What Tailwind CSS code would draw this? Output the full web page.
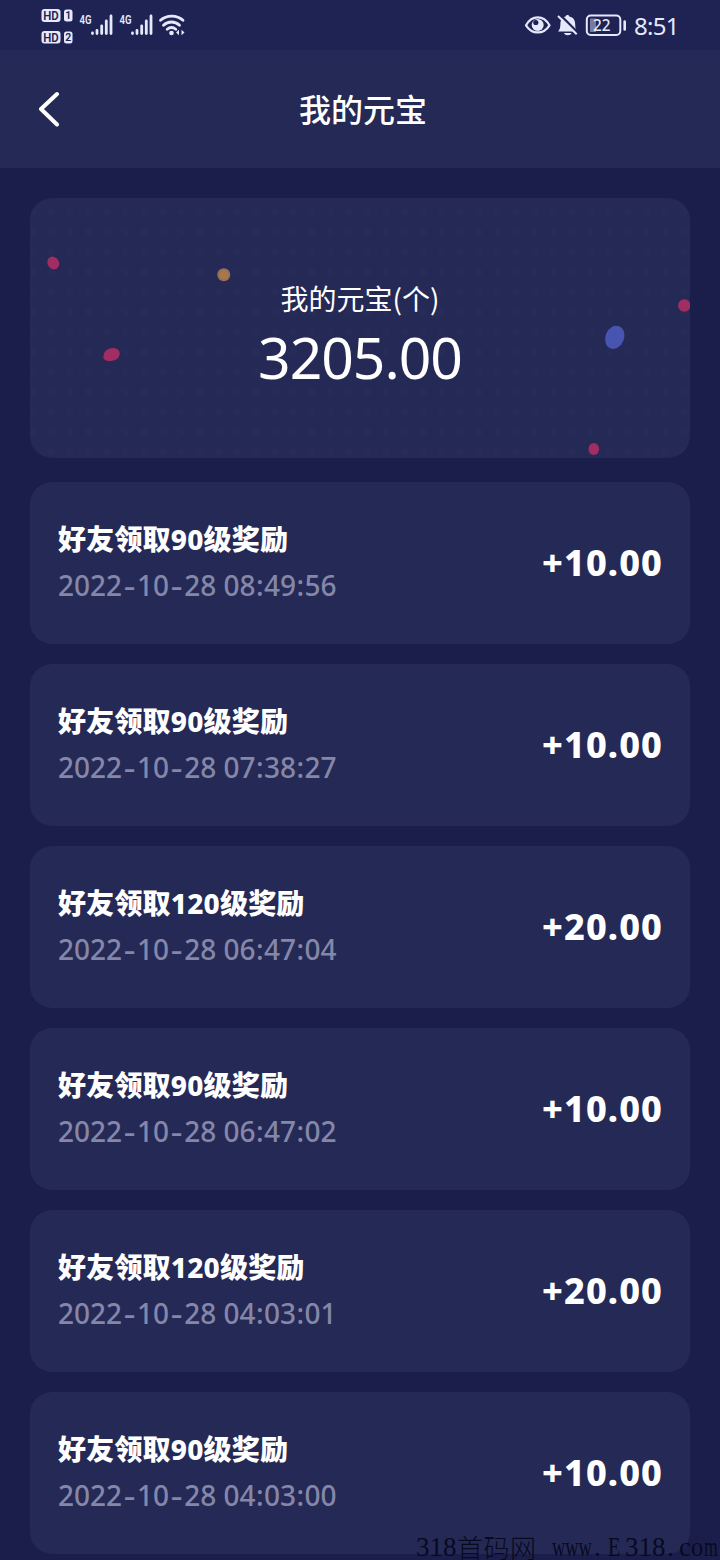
<!DOCTYPE html>
<html lang="zh-CN">
<head>
<meta charset="utf-8">
<title>我的元宝</title>
<script src="https://cdn.jsdelivr.net/npm/@tailwindcss/browser@4"></script>
</head>
<body class="bg-[#1b1e4b]">
<div class="relative flex h-[1560px] w-[720px] flex-col overflow-hidden bg-[#1b1e4b] font-['Noto_Sans','Noto_Sans_CJK_SC',sans-serif] text-white">

  <div class="flex h-[50px] shrink-0 items-center justify-between bg-[#1e2353] pl-[40px] pr-[42px] text-[#e6e8fb]">
    <svg class="h-[50px] w-[150px]" viewBox="40 0 150 50" fill="#e6e8fb" font-family="Roboto, sans-serif">
      <rect x="41.500" y="9" width="19" height="13" rx="3"/><rect x="64" y="9.500" width="8.500" height="12" rx="2.500"/>
      <rect x="41.500" y="31" width="19" height="12.500" rx="3"/><rect x="64" y="31.500" width="8.500" height="12" rx="2.500"/>
      <g fill="#1e2353" font-weight="600"><text x="43.300" y="19.700" font-size="12" textLength="15.500" lengthAdjust="spacingAndGlyphs">HD</text><text x="65.300" y="19.300" font-size="10.500">1</text><text x="43.300" y="41.500" font-size="12" textLength="15.500" lengthAdjust="spacingAndGlyphs">HD</text><text x="65.300" y="41.300" font-size="10.500">2</text></g>
      <g font-weight="600" font-size="12.500"><text x="79.500" y="24" textLength="12" lengthAdjust="spacingAndGlyphs">4G</text><text x="119.500" y="24" textLength="12" lengthAdjust="spacingAndGlyphs">4G</text></g>
      <g stroke="#e6e8fb" stroke-width="2.800" stroke-linecap="round"><path d="M92.500 33v.5M97 30.500v3M101.700 26v7.500M106.300 21v12.500M111 16v17.500M132.500 33v.5M137 30.500v3M141.700 26v7.500M146.300 21v12.500M151 16v17.500"/></g>
      <g fill="none" stroke="#e6e8fb" stroke-width="2.800" stroke-linecap="round"><path d="M160.500 20.300c6-5.700 16.500-5.700 22.500 0M163.500 25.200c4.500-4.300 11.500-4.300 16 0M167.200 29.300c2.700-2.300 5.900-2.300 8.600 0"/></g>
      <circle cx="171.500" cy="33" r="2.300"/><path d="M176 32.500l3-2.700v5.400zM184.500 32.500l-3-2.700v5.400z"/>
    </svg>
    <div class="flex items-center">
      <svg class="h-[50px] w-[104px]" viewBox="524 0 104 50" fill="none">
        <path d="M526 25.300c6-10.500 17.500-10.500 23.500 0-6 9.500-17.500 9.500-23.500 0z" stroke="#e6e8fb" stroke-width="2.200" stroke-linejoin="round"/>
        <circle cx="537.700" cy="25" r="6" fill="#e6e8fb"/><circle cx="535.800" cy="22.500" r="2.600" fill="#1e2353"/>
        <path d="M558 31.500c1.800-2 2.400-4 2.400-7.500 0-4.500 2-6.800 5.300-7.600 0-2 3.600-2 3.600 0 4.300 .9 5.900 4 5.900 8 0 3.500.4 5 2.400 7.100z" fill="#e6e8fb"/><path d="M564 33h7.500c-1 3-6.500 3-7.500 0z" fill="#e6e8fb"/>
        <path d="M559.800 14.500l18 18" stroke="#1e2353" stroke-width="2.400"/><path d="M558 16l18.700 18.300" stroke="#e6e8fb" stroke-width="2"/>
        <rect x="586.800" y="15.500" width="33.500" height="19.500" rx="4" stroke="#e6e8fb" stroke-width="2"/><path d="M590 18.500h6v13.500h-6z" fill="#777b9f"/>
        <path d="M624.700 21.500v8" stroke="#e6e8fb" stroke-width="2.600" stroke-linecap="round"/>
        <text x="593" y="31" font-size="17" font-family="'Noto Sans', sans-serif" font-weight="500" fill="#e6e8fb" textLength="17.500" lengthAdjust="spacingAndGlyphs">22</text>
      </svg>
      <span class="ml-[6px] mt-[1px] w-[44px] whitespace-nowrap text-[24px] leading-none tracking-[-0.7px]">8:51</span>
    </div>
  </div>

  <header class="grid h-[118px] shrink-0 grid-cols-3 items-center bg-[#252955]">
    <svg class="ml-[36px] h-[36px] w-[26px]" viewBox="0 0 26 36" fill="none" stroke="#fff" stroke-width="4" stroke-linecap="round" stroke-linejoin="round"><path d="M21 3L5 18l16 15.500"/></svg>
    <h1 class="mb-[3px] ml-[6px] whitespace-nowrap text-center font-['Noto_Sans_CJK_SC',sans-serif] text-[32px] font-medium leading-[40px]">我的元宝</h1>
  </header>

  <main class="flex flex-col px-[30px] pt-[30px]">
    <section class="relative flex h-[260px] flex-col items-center overflow-hidden rounded-[22px] bg-[#252955] pt-[80px]">
      <svg class="absolute inset-0 h-full w-full" viewBox="30 198 660 260">
        <defs><pattern id="dots" x="42" y="202" width="18.600" height="20" patternUnits="userSpaceOnUse"><circle cx="9.300" cy="10" r="3.500" fill="#272b57"/></pattern></defs>
        <rect x="30" y="198" width="660" height="260" fill="url(#dots)"/>
        <ellipse cx="53.300" cy="263" rx="5.700" ry="6.700" transform="rotate(-30 53.300 263)" fill="#a12d62"/>
        <circle cx="223.800" cy="274.700" r="6.500" fill="#987059"/><circle cx="223.800" cy="274.700" r="4.500" fill="#a87848"/>
        <path d="M104 354c1-4 5-6 10-6 8 1 7 10 1 12-3 1-7 2-10 0-2-1-2-4-1-6z" fill="#a12d62"/>
        <ellipse cx="614.800" cy="337.300" rx="9.300" ry="11.900" transform="rotate(22 614.800 337.300)" fill="#4855b0"/>
        <circle cx="684.300" cy="305.500" r="6.200" fill="#a12d62"/>
        <ellipse cx="593.800" cy="449" rx="5.300" ry="6" fill="#a12d62"/>
      </svg>
      <div class="relative whitespace-nowrap font-['Noto_Sans_CJK_SC',sans-serif] text-[28px] leading-[40px]">我的元宝(个)</div>
      <div class="relative mt-[11px] whitespace-nowrap text-[57px] leading-[56px] tracking-[-1px]">3205.00</div>
    </section>

    <ul id="records" class="mt-[24px] flex flex-col gap-[20px]"></ul>
  </main>

  <div class="absolute bottom-0 left-[416px] flex h-[26px] items-center whitespace-nowrap font-['Liberation_Serif',serif] text-[27px] leading-[26px] text-[#080a20]">
    <span class="w-[41px] tracking-[0px]">318</span>
    <span class="w-[95px] font-['Noto_Sans_CJK_SC',sans-serif] text-[26px] font-light tracking-[0.5px]">首码网</span>
    <span class="w-[42px] origin-left scale-x-68">www</span>
    <span class="w-[14px]">.</span>
    <span class="w-[17px] origin-left scale-x-75">E</span>
    <span class="w-[42px]">318</span>
    <span class="w-[12px]">.</span>
    <span class="w-[12px]">c</span>
    <span class="w-[13px] origin-left scale-x-90">o</span>
    <span class="w-[16px] origin-left scale-x-66">m</span>
  </div>
</div>
<script>
  const records = [
    ["90", "2022-10-28 08:49:56", "+10.00"],
    ["90", "2022-10-28 07:38:27", "+10.00"],
    ["120", "2022-10-28 06:47:04", "+20.00"],
    ["90", "2022-10-28 06:47:02", "+10.00"],
    ["120", "2022-10-28 04:03:01", "+20.00"],
    ["90", "2022-10-28 04:03:00", "+10.00"],
  ];
  const dash = '<span class="inline-block w-[15px] scale-x-130 text-center">-</span>';
  const colon = '<span class="inline-block w-[8.5px] text-center">:</span>';
  document.getElementById("records").innerHTML = records.map(([level, time, amount]) => `
    <li class="flex h-[162px] items-center justify-between rounded-[22px] bg-[#252955] px-[28px]">
      <div class="mb-[2px] whitespace-nowrap">
        <p class="h-[46px] text-[28px] font-extrabold leading-[46px] tracking-[0.2px]">好友领取${level}级奖励</p>
        <p class="h-[46px] text-[28px] font-medium leading-[46px] text-[#8587a8]">${time.replace(/[-:]/g, c => c === "-" ? dash : colon)}</p>
      </div>
      <span class="-mr-[1px] text-[36px] font-extrabold leading-none tracking-[1.1px]">${amount}</span>
    </li>`).join("");
</script>
</body>
</html>
